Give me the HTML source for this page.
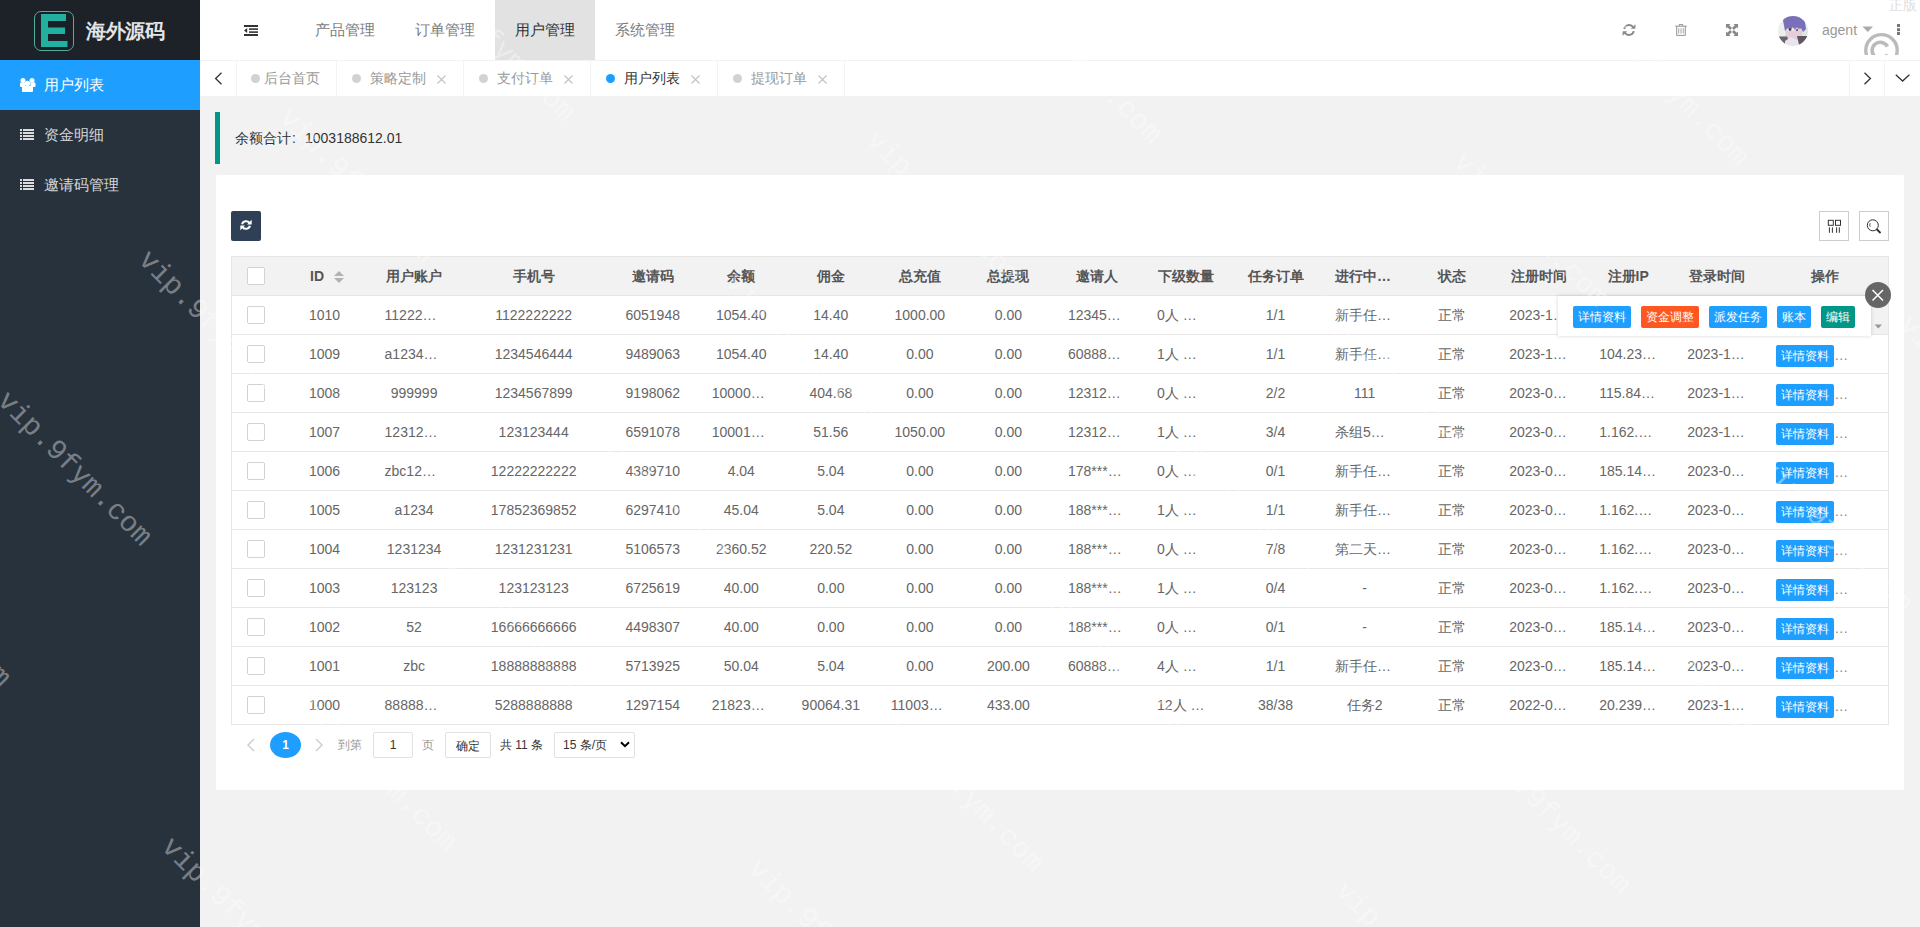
<!DOCTYPE html>
<html><head><meta charset="utf-8"><title>用户列表</title>
<style>
*{box-sizing:border-box;margin:0;padding:0}
html,body{width:1920px;height:927px;overflow:hidden}
body{position:relative;background:#f2f2f2;font-family:"Liberation Sans",sans-serif;font-size:14px;color:#666}
.abs{position:absolute}
svg{position:absolute;overflow:visible}
#side{position:absolute;left:0;top:0;width:200px;height:927px;background:#28323c;overflow:hidden}
#logo{position:absolute;left:0;top:0;width:200px;height:60px;background:#1d2229}
#logo .lbox{position:absolute;left:34px;top:11px;width:40px;height:40px;border:1px solid #4fae9f;border-radius:7px;background:#1a2027}
#logo .ltxt{position:absolute;left:86px;top:17px;font-size:20px;font-weight:bold;color:#e4e4e4;line-height:28px;letter-spacing:-0.5px}
.mi{position:absolute;left:0;width:200px;height:50px;line-height:50px;color:#d5d7d9;font-size:15px}
.mi .t{position:absolute;left:44px;top:0}
.mi.on{background:#1e9fff;color:#fff}
#hdr{position:absolute;left:200px;top:0;width:1720px;height:60px;background:#fff;overflow:hidden}
.nav{position:absolute;top:0;height:60px;line-height:60px;font-size:15px;color:#7c7c7c;width:100px;text-align:center}
.nav.on{background:#e2e2e2;color:#333}
#tabs{position:absolute;left:200px;top:60px;width:1720px;height:36px;background:#fff;border-top:1px solid #f3f3f3}
.tt{position:absolute;top:0;line-height:35px;color:#999;font-size:14px}
.dot{position:absolute;top:13px;width:9px;height:9px;border-radius:50%;background:#d2d2d2}
.sep{position:absolute;top:0;width:1px;height:35px;background:#f3f3f3}
#quote{position:absolute;left:215px;top:112px;width:1689px;height:52px;border-left:5px solid #009688;background:#f2f2f2}
#quote .t{position:absolute;left:15px;top:16px;line-height:20px;color:#333;font-size:14px}
#card{position:absolute;left:216px;top:175px;width:1688px;height:615px;background:#fff;border-radius:2px}
.tb{position:absolute;left:231px;top:256px;border-collapse:collapse;table-layout:fixed;width:1658px;border:1px solid #e6e6e6}
.tb th,.tb td{padding:5px 0;border-bottom:1px solid #e6e6e6;text-align:center}
.tb th{background:#f2f2f2;font-weight:bold;color:#555}
.tb td.op{text-align:left}
.cell{height:28px;line-height:28px;padding:0 15px;overflow:hidden;white-space:nowrap;text-overflow:ellipsis;position:relative}
.cell.cb{padding:0}
.cell.l{text-align:left}
.ck{display:inline-block;width:18px;height:18px;border:1px solid #d2d2d2;background:#fff;vertical-align:middle;margin-top:-3px;border-radius:2px}
.sort{display:inline-block;width:10px;height:20px;margin-left:5px;vertical-align:middle;position:relative;margin-top:-3px}
.sort:before{content:"";position:absolute;left:5px;top:5px;border:5.5px solid transparent;border-top:0;border-bottom:5px solid #b2b2b2}
.sort:after{content:"";position:absolute;left:5px;top:12px;border:5.5px solid transparent;border-bottom:0;border-top:5px solid #b2b2b2}
.bx{display:inline-block;height:22px;line-height:22px;padding:0 5px;font-size:12px;color:#fff;border-radius:2px;vertical-align:middle;margin-top:-2px;position:relative;top:2px}
.bn{background:#1e9fff}.bd{background:#ff5722}.bg{background:#009688}
.dots{vertical-align:middle;letter-spacing:0;color:#888}
.tbtn{position:absolute;top:211px;width:30px;height:30px;border:1px solid #ccc;background:#fff}
#tips{position:absolute;left:1558px;top:296px;width:313px;height:40px;background:#fff;box-shadow:0 0 4px rgba(0,0,0,.16);padding:10px 15px}
#tips{white-space:nowrap;font-size:0}
#tips .bx{margin-top:0;vertical-align:top;margin-left:10px;top:0}
#tips .bx:first-child{margin-left:0}
#pager{position:absolute;left:231px;top:731px;height:28px;font-size:12px;color:#999}
.wm{position:absolute;font-family:"Liberation Mono",monospace;font-size:28.5px;line-height:1;color:rgba(255,255,255,.4);transform-origin:0 0;transform:rotate(45deg);white-space:nowrap;pointer-events:none}
</style></head><body>
<div id="side">
  <div id="logo">
    <div class="lbox"></div>
    <svg style="left:0;top:0" width="200" height="60"><path fill="#22b0a0" d="M41 14h25v7H48v6.5h17v6.5H48v7h19.5v6H41z"/></svg>
    <div class="ltxt">海外源码</div>
  </div>
  <div class="mi on" style="top:60px">
    <svg style="left:0;top:-60px" width="40" height="120"><g fill="#fff">
      <circle cx="23" cy="80.5" r="2.5"/><circle cx="32" cy="80.5" r="2.5"/>
      <rect x="20" y="82.5" width="5" height="4.5" rx="1"/><rect x="30.5" y="82.5" width="5" height="4.5" rx="1"/>
      <circle cx="27.5" cy="83.5" r="2.8"/><rect x="22" y="86" width="11" height="6" rx="1"/></g></svg>
    <span class="t">用户列表</span></div>
  <div class="mi" style="top:110px">
    <svg style="left:0;top:0" width="40" height="50"><g fill="#dcdcdc">
      <rect x="20" y="19" width="2" height="2"/><rect x="23" y="19" width="11" height="2"/>
      <rect x="20" y="22" width="2" height="2"/><rect x="23" y="22" width="11" height="2"/>
      <rect x="20" y="25" width="2" height="2"/><rect x="23" y="25" width="11" height="2"/>
      <rect x="20" y="28" width="2" height="2"/><rect x="23" y="28" width="11" height="2"/></g></svg>
    <span class="t">资金明细</span></div>
  <div class="mi" style="top:160px">
    <svg style="left:0;top:0" width="40" height="50"><g fill="#dcdcdc">
      <rect x="20" y="19" width="2" height="2"/><rect x="23" y="19" width="11" height="2"/>
      <rect x="20" y="22" width="2" height="2"/><rect x="23" y="22" width="11" height="2"/>
      <rect x="20" y="25" width="2" height="2"/><rect x="23" y="25" width="11" height="2"/>
      <rect x="20" y="28" width="2" height="2"/><rect x="23" y="28" width="11" height="2"/></g></svg>
    <span class="t">邀请码管理</span></div>
</div>
<div id="hdr">
  <svg style="left:0;top:0" width="80" height="60"><g fill="#333">
    <rect x="44" y="25" width="14" height="2"/><rect x="49" y="28.3" width="9" height="1.6"/>
    <rect x="49" y="31.3" width="9" height="1.6"/><rect x="44" y="34" width="14" height="2"/>
    <path d="M44 30.5L47.2 28v5z"/></g></svg>
  <div class="nav" style="left:95px">产品管理</div>
  <div class="nav" style="left:195px">订单管理</div>
  <div class="nav on" style="left:295px">用户管理</div>
  <div class="nav" style="left:395px">系统管理</div>
  <!-- refresh -->
  <svg style="left:1422px;top:23px" width="14" height="14" viewBox="0 0 14 14"><g fill="none" stroke="#888" stroke-width="1.8">
    <path d="M2.2 6A5 5 0 0 1 11.2 4.2"/><path d="M11.8 8A5 5 0 0 1 2.8 9.8"/></g>
    <g fill="#888"><path d="M13.4 1.2v4.6H8.8z"/><path d="M0.6 12.8V8.2h4.6z"/></g></svg>
  <!-- trash -->
  <svg style="left:1475px;top:24px" width="12" height="12" viewBox="0 0 12 12"><g fill="none" stroke="#888" stroke-width="0.9">
    <path d="M0.2 2.2h11.6"/><path d="M4.2 2V0.6h3.6V2"/><path d="M1.7 2.4v9h8.6v-9"/>
    <path d="M3.7 4.3v5.3M6 4.3v5.3M8.3 4.3v5.3" stroke-width="0.75"/></g></svg>
  <!-- fullscreen -->
  <svg style="left:1526px;top:24px" width="12" height="12" viewBox="0 0 12 12"><g fill="#888">
    <path d="M0 0h4.5L3.2 1.3 6 4.1 4.1 6 1.3 3.2 0 4.5z"/>
    <path d="M12 0v4.5L10.7 3.2 7.9 6 6 4.1 8.8 1.3 7.5 0z"/>
    <path d="M0 12V7.5l1.3 1.3L4.1 6 6 7.9 3.2 10.7 4.5 12z"/>
    <path d="M12 12H7.5l1.3-1.3L6 7.9 7.9 6l2.8 2.8L12 7.5z"/></g></svg>
  <!-- avatar -->
  <svg style="left:1578px;top:16px" width="30" height="30" viewBox="0 0 30 30">
    <defs><clipPath id="av"><circle cx="15" cy="15" r="15"/></clipPath><filter id="bl"><feGaussianBlur stdDeviation="0.7"/></filter></defs>
    <g clip-path="url(#av)"><g filter="url(#bl)">
      <rect x="-2" y="-2" width="34" height="34" fill="#eceee9"/>
      <path d="M23 8h9v22h-9z" fill="#dfe7e2"/>
      <path d="M4 -1h22l2 14-3 3-2-4-2 3-2-4-2 4-2-4-3 4-2-3-3 3z" fill="#7a70b9"/>
      <path d="M8 13l3 2 2-3 2 4 2-4 2 3 2-3 3 3v7l-9 4-8-4z" fill="#e4ccd8"/>
      <circle cx="12" cy="13.5" r="1.2" fill="#3c3450"/><circle cx="19" cy="14" r="1" fill="#4a405e"/>
      <path d="M-1 20.5h10l4 10H-1z" fill="#696270"/>
      <path d="M31 20h-12l2.5 11H31z" fill="#5e5762"/>
      <path d="M7 25l6-4 6 3 1.5 7H7z" fill="#e9e3ec"/>
    </g></g></svg>
  <div class="abs" style="left:1622px;top:20px;font-size:14px;color:#999;line-height:20px">agent</div>
  <svg style="left:1662px;top:26px" width="12" height="8"><path d="M0.5 0.5h10.5L5.75 6z" fill="#aaa"/></svg>
  <svg style="left:1696px;top:24px" width="6" height="12"><g fill="#777"><rect x="1" y="0" width="3" height="3"/><rect x="1" y="4.2" width="3" height="3"/><rect x="1" y="8" width="3" height="3"/></g></svg>
  <!-- copyright ring -->
  <svg style="left:1663px;top:32px;overflow:hidden" width="38" height="23" viewBox="0 0 38 23"><g fill="none" stroke="#bbb">
    <circle cx="18.5" cy="18.3" r="15.7" stroke-width="3.4"/>
    <path d="M24.5 14.5A8.2 8.2 0 1 0 24.5 22.5" stroke-width="3.6"/></g></svg>
  <div class="abs" style="left:1689px;top:-5px;font-size:14px;color:#e0e0e0;line-height:20px">正版</div>
</div>
<div id="tabs">
  <svg style="left:14px;top:11px" width="10" height="14"><path d="M7.5 0.8L1.6 6.5l5.9 5.7" fill="none" stroke="#333" stroke-width="1.3"/></svg>
  <div class="sep" style="left:36px"></div>
  <div class="dot" style="left:51px"></div><div class="tt" style="left:64px">后台首页</div>
  <div class="sep" style="left:136px"></div>
  <div class="dot" style="left:152px"></div><div class="tt" style="left:170px">策略定制</div>
  <svg style="left:237px;top:14px" width="9" height="9"><path d="M0.5 0.5l8 8M8.5 0.5l-8 8" stroke="#c2c2c2" stroke-width="1.1"/></svg>
  <div class="sep" style="left:263px"></div>
  <div class="dot" style="left:279px"></div><div class="tt" style="left:297px">支付订单</div>
  <svg style="left:364px;top:14px" width="9" height="9"><path d="M0.5 0.5l8 8M8.5 0.5l-8 8" stroke="#c2c2c2" stroke-width="1.1"/></svg>
  <div class="sep" style="left:390px"></div>
  <div class="dot" style="left:406px;background:#1e9fff"></div><div class="tt" style="left:424px;color:#333">用户列表</div>
  <svg style="left:491px;top:14px" width="9" height="9"><path d="M0.5 0.5l8 8M8.5 0.5l-8 8" stroke="#c2c2c2" stroke-width="1.1"/></svg>
  <div class="sep" style="left:517px"></div>
  <div class="dot" style="left:533px"></div><div class="tt" style="left:551px">提现订单</div>
  <svg style="left:618px;top:14px" width="9" height="9"><path d="M0.5 0.5l8 8M8.5 0.5l-8 8" stroke="#c2c2c2" stroke-width="1.1"/></svg>
  <div class="sep" style="left:644px"></div>
  <div class="sep" style="left:1649px"></div>
  <svg style="left:1663px;top:11px" width="10" height="14"><path d="M1.5 0.8l5.9 5.7-5.9 5.7" fill="none" stroke="#333" stroke-width="1.3"/></svg>
  <div class="sep" style="left:1684px"></div>
  <svg style="left:1695px;top:13px" width="16" height="9"><path d="M0.8 0.8l6.8 6.2 6.8-6.2" fill="none" stroke="#333" stroke-width="1.3"/></svg>
</div>
<div id="quote"><div class="t">余额合计<span style="display:inline-block;width:14px;padding-left:1px">:</span>1003188612.01</div></div>
<div id="card"></div>
<!-- toolbar -->
<div class="abs" style="left:231px;top:211px;width:30px;height:30px;background:#2f4056;border-radius:2px"></div>
<svg style="left:240px;top:219px" width="12" height="12" viewBox="0 0 14 14"><g fill="none" stroke="#fff" stroke-width="2.4">
  <path d="M2.4 6.2A4.8 4.8 0 0 1 11 4.6"/><path d="M11.6 7.8A4.8 4.8 0 0 1 3 9.4"/></g>
  <g fill="#fff"><path d="M13.6 1v5.4H8.2z"/><path d="M0.4 13V7.6h5.4z"/></g></svg>
<div class="tbtn" style="left:1819px"></div>
<svg style="left:1827px;top:219px" width="16" height="16"><g fill="none" stroke="#333" stroke-width="1">
  <rect x="1.3" y="1.3" width="5" height="5"/><rect x="8.5" y="1.3" width="5" height="5"/>
  <path d="M2.4 8.3v5.5M5.4 8.3v5.5M9.6 8.3v5.5M12.3 8.3v5.5" stroke-width="1"/></g></svg>
<div class="tbtn" style="left:1859px"></div>
<svg style="left:1866px;top:219px" width="16" height="16"><g fill="none" stroke="#333">
  <circle cx="6.8" cy="6.3" r="5.5" stroke-width="1"/><path d="M11 10.6l3 2.8" stroke-width="2" stroke-linecap="round"/><path d="M4.3 4.2a3 3 0 0 0 0 3.6" stroke-width="0.8"/></g></svg>
<table class="tb"><colgroup><col style="width:48px"><col style="width:90px"><col style="width:89px"><col style="width:150px"><col style="width:88px"><col style="width:89px"><col style="width:90px"><col style="width:88px"><col style="width:89px"><col style="width:89px"><col style="width:89px"><col style="width:89px"><col style="width:89px"><col style="width:85px"><col style="width:90px"><col style="width:88px"><col style="width:89px"><col style="width:127px"></colgroup><thead><tr><th><div class="cell cb"><i class="ck"></i></div></th><th><div class="cell">ID<span class="sort"><i class="su"></i><i class="sd"></i></span></div></th><th><div class="cell">用户账户</div></th><th><div class="cell">手机号</div></th><th><div class="cell">邀请码</div></th><th><div class="cell">余额</div></th><th><div class="cell">佣金</div></th><th><div class="cell">总充值</div></th><th><div class="cell">总提现</div></th><th><div class="cell">邀请人</div></th><th><div class="cell">下级数量</div></th><th><div class="cell">任务订单</div></th><th><div class="cell">进行中任务</div></th><th><div class="cell">状态</div></th><th><div class="cell">注册时间</div></th><th><div class="cell">注册IP</div></th><th><div class="cell">登录时间</div></th><th><div class="cell">操作</div></th></tr></thead><tbody><tr><td><div class="cell cb"><i class="ck"></i></div></td><td><div class="cell">1010</div></td><td><div class="cell">1122222222</div></td><td><div class="cell">1122222222</div></td><td><div class="cell">6051948</div></td><td><div class="cell">1054.40</div></td><td><div class="cell">14.40</div></td><td><div class="cell">1000.00</div></td><td><div class="cell">0.00</div></td><td><div class="cell">1234567890</div></td><td><div class="cell l">0人 …</div></td><td><div class="cell">1/1</div></td><td><div class="cell">新手任务一二</div></td><td><div class="cell">正常</div></td><td><div class="cell">2023-1x-xx 10:10:10</div></td><td><div class="cell"></div></td><td><div class="cell">2023-1x</div></td><td class="op"><div class="cell"><span class="bx bn">详情资料</span><span class="dots">…</span></div></td></tr><tr><td><div class="cell cb"><i class="ck"></i></div></td><td><div class="cell">1009</div></td><td><div class="cell">a123456789</div></td><td><div class="cell">1234546444</div></td><td><div class="cell">9489063</div></td><td><div class="cell">1054.40</div></td><td><div class="cell">14.40</div></td><td><div class="cell">0.00</div></td><td><div class="cell">0.00</div></td><td><div class="cell">6088888888</div></td><td><div class="cell l">1人 …</div></td><td><div class="cell">1/1</div></td><td><div class="cell">新手任务一二</div></td><td><div class="cell">正常</div></td><td><div class="cell">2023-1x-xx 10:10:10</div></td><td><div class="cell">104.234.56.78</div></td><td><div class="cell">2023-1x-xx 10:10</div></td><td class="op"><div class="cell"><span class="bx bn">详情资料</span><span class="dots">…</span></div></td></tr><tr><td><div class="cell cb"><i class="ck"></i></div></td><td><div class="cell">1008</div></td><td><div class="cell">999999</div></td><td><div class="cell">1234567899</div></td><td><div class="cell">9198062</div></td><td><div class="cell">10000000.00</div></td><td><div class="cell">404.68</div></td><td><div class="cell">0.00</div></td><td><div class="cell">0.00</div></td><td><div class="cell">1231231234</div></td><td><div class="cell l">0人 …</div></td><td><div class="cell">2/2</div></td><td><div class="cell">111</div></td><td><div class="cell">正常</div></td><td><div class="cell">2023-0x-xx 10:10:10</div></td><td><div class="cell">115.84.56.78</div></td><td><div class="cell">2023-1x-xx 10:10</div></td><td class="op"><div class="cell"><span class="bx bn">详情资料</span><span class="dots">…</span></div></td></tr><tr><td><div class="cell cb"><i class="ck"></i></div></td><td><div class="cell">1007</div></td><td><div class="cell">1231231234</div></td><td><div class="cell">123123444</div></td><td><div class="cell">6591078</div></td><td><div class="cell">10001000.00</div></td><td><div class="cell">51.56</div></td><td><div class="cell">1050.00</div></td><td><div class="cell">0.00</div></td><td><div class="cell">1231231234</div></td><td><div class="cell l">1人 …</div></td><td><div class="cell">3/4</div></td><td><div class="cell">杀组5一二三</div></td><td><div class="cell">正常</div></td><td><div class="cell">2023-0x-xx 10:10:10</div></td><td><div class="cell">1.162.123.45</div></td><td><div class="cell">2023-1x-xx 10:10</div></td><td class="op"><div class="cell"><span class="bx bn">详情资料</span><span class="dots">…</span></div></td></tr><tr><td><div class="cell cb"><i class="ck"></i></div></td><td><div class="cell">1006</div></td><td><div class="cell">zbc1234567</div></td><td><div class="cell">12222222222</div></td><td><div class="cell">4389710</div></td><td><div class="cell">4.04</div></td><td><div class="cell">5.04</div></td><td><div class="cell">0.00</div></td><td><div class="cell">0.00</div></td><td><div class="cell">178****1234</div></td><td><div class="cell l">0人 …</div></td><td><div class="cell">0/1</div></td><td><div class="cell">新手任务一二</div></td><td><div class="cell">正常</div></td><td><div class="cell">2023-0x-xx 10:10:10</div></td><td><div class="cell">185.14.56.78</div></td><td><div class="cell">2023-0x-xx 10:10</div></td><td class="op"><div class="cell"><span class="bx bn">详情资料</span><span class="dots">…</span></div></td></tr><tr><td><div class="cell cb"><i class="ck"></i></div></td><td><div class="cell">1005</div></td><td><div class="cell">a1234</div></td><td><div class="cell">17852369852</div></td><td><div class="cell">6297410</div></td><td><div class="cell">45.04</div></td><td><div class="cell">5.04</div></td><td><div class="cell">0.00</div></td><td><div class="cell">0.00</div></td><td><div class="cell">188****1234</div></td><td><div class="cell l">1人 …</div></td><td><div class="cell">1/1</div></td><td><div class="cell">新手任务一二</div></td><td><div class="cell">正常</div></td><td><div class="cell">2023-0x-xx 10:10:10</div></td><td><div class="cell">1.162.123.45</div></td><td><div class="cell">2023-0x-xx 10:10</div></td><td class="op"><div class="cell"><span class="bx bn">详情资料</span><span class="dots">…</span></div></td></tr><tr><td><div class="cell cb"><i class="ck"></i></div></td><td><div class="cell">1004</div></td><td><div class="cell">1231234</div></td><td><div class="cell">1231231231</div></td><td><div class="cell">5106573</div></td><td><div class="cell">2360.52</div></td><td><div class="cell">220.52</div></td><td><div class="cell">0.00</div></td><td><div class="cell">0.00</div></td><td><div class="cell">188****1234</div></td><td><div class="cell l">0人 …</div></td><td><div class="cell">7/8</div></td><td><div class="cell">第二天任务一</div></td><td><div class="cell">正常</div></td><td><div class="cell">2023-0x-xx 10:10:10</div></td><td><div class="cell">1.162.123.45</div></td><td><div class="cell">2023-0x-xx 10:10</div></td><td class="op"><div class="cell"><span class="bx bn">详情资料</span><span class="dots">…</span></div></td></tr><tr><td><div class="cell cb"><i class="ck"></i></div></td><td><div class="cell">1003</div></td><td><div class="cell">123123</div></td><td><div class="cell">123123123</div></td><td><div class="cell">6725619</div></td><td><div class="cell">40.00</div></td><td><div class="cell">0.00</div></td><td><div class="cell">0.00</div></td><td><div class="cell">0.00</div></td><td><div class="cell">188****1234</div></td><td><div class="cell l">1人 …</div></td><td><div class="cell">0/4</div></td><td><div class="cell">-</div></td><td><div class="cell">正常</div></td><td><div class="cell">2023-0x-xx 10:10:10</div></td><td><div class="cell">1.162.123.45</div></td><td><div class="cell">2023-0x-xx 10:10</div></td><td class="op"><div class="cell"><span class="bx bn">详情资料</span><span class="dots">…</span></div></td></tr><tr><td><div class="cell cb"><i class="ck"></i></div></td><td><div class="cell">1002</div></td><td><div class="cell">52</div></td><td><div class="cell">16666666666</div></td><td><div class="cell">4498307</div></td><td><div class="cell">40.00</div></td><td><div class="cell">0.00</div></td><td><div class="cell">0.00</div></td><td><div class="cell">0.00</div></td><td><div class="cell">188****1234</div></td><td><div class="cell l">0人 …</div></td><td><div class="cell">0/1</div></td><td><div class="cell">-</div></td><td><div class="cell">正常</div></td><td><div class="cell">2023-0x-xx 10:10:10</div></td><td><div class="cell">185.14.56.78</div></td><td><div class="cell">2023-0x-xx 10:10</div></td><td class="op"><div class="cell"><span class="bx bn">详情资料</span><span class="dots">…</span></div></td></tr><tr><td><div class="cell cb"><i class="ck"></i></div></td><td><div class="cell">1001</div></td><td><div class="cell">zbc</div></td><td><div class="cell">18888888888</div></td><td><div class="cell">5713925</div></td><td><div class="cell">50.04</div></td><td><div class="cell">5.04</div></td><td><div class="cell">0.00</div></td><td><div class="cell">200.00</div></td><td><div class="cell">6088888888</div></td><td><div class="cell l">4人 …</div></td><td><div class="cell">1/1</div></td><td><div class="cell">新手任务一二</div></td><td><div class="cell">正常</div></td><td><div class="cell">2023-0x-xx 10:10:10</div></td><td><div class="cell">185.14.56.78</div></td><td><div class="cell">2023-0x-xx 10:10</div></td><td class="op"><div class="cell"><span class="bx bn">详情资料</span><span class="dots">…</span></div></td></tr><tr><td><div class="cell cb"><i class="ck"></i></div></td><td><div class="cell">1000</div></td><td><div class="cell">8888888888</div></td><td><div class="cell">5288888888</div></td><td><div class="cell">1297154</div></td><td><div class="cell">21823000.00</div></td><td><div class="cell">90064.31</div></td><td><div class="cell">11003000.00</div></td><td><div class="cell">433.00</div></td><td><div class="cell"></div></td><td><div class="cell l">12人 …</div></td><td><div class="cell">38/38</div></td><td><div class="cell">任务2</div></td><td><div class="cell">正常</div></td><td><div class="cell">2022-0x-xx 10:10:10</div></td><td><div class="cell">20.239.56.78</div></td><td><div class="cell">2023-1x-xx 10:10</div></td><td class="op"><div class="cell"><span class="bx bn">详情资料</span><span class="dots">…</span></div></td></tr></tbody></table>
<!-- tips popup -->
<div class="abs" style="left:1870px;top:296px;width:18px;height:38px;background:#f2f2f2"></div>
<svg style="left:1874px;top:324px" width="9" height="5"><path d="M0.5 0.5h7.5L4.25 4.5z" fill="#999"/></svg>
<div id="tips"><span class="bx bn">详情资料</span><span class="bx bd">资金调整</span><span class="bx bn">派发任务</span><span class="bx bn">账本</span><span class="bx bg">编辑</span></div>
<svg style="left:1865px;top:282px" width="26" height="26"><circle cx="13" cy="13" r="13" fill="#666"/><path d="M7.5 8l10.5 10.5M18 8L7.5 18.5" stroke="#fff" stroke-width="1.5"/></svg>
<!-- pager -->
<svg style="left:246px;top:738px" width="10" height="14"><path d="M8 1L2 7l6 6" fill="none" stroke="#ccc" stroke-width="1.4"/></svg>
<div class="abs" style="left:270px;top:732px;width:31px;height:26px;border-radius:50%;background:#1e9fff;color:#fff;font-size:12px;font-weight:bold;text-align:center;line-height:26px">1</div>
<svg style="left:314px;top:738px" width="10" height="14"><path d="M2 1l6 6-6 6" fill="none" stroke="#ccc" stroke-width="1.4"/></svg>
<div class="abs" style="left:338px;top:732px;font-size:12px;line-height:26px;color:#999">到第</div>
<div class="abs" style="left:373px;top:732px;width:40px;height:26px;border:1px solid #e2e2e2;border-radius:2px;font-size:12px;line-height:24px;text-align:center;color:#333">1</div>
<div class="abs" style="left:422px;top:732px;font-size:12px;line-height:26px;color:#999">页</div>
<div class="abs" style="left:445px;top:732px;width:46px;height:26px;border:1px solid #e2e2e2;border-radius:2px;font-size:12px;line-height:26px;text-align:center;color:#333">确定</div>
<div class="abs" style="left:500px;top:732px;font-size:12px;line-height:26px;color:#333">共 11 条</div>
<div class="abs" style="left:554px;top:732px;width:81px;height:26px;border:1px solid #e2e2e2;border-radius:2px;font-size:12px;line-height:24px;color:#333;padding-left:8px">15 条/页</div>
<svg style="left:620px;top:741px" width="10" height="8"><path d="M1 1.2l4 4 4-4" fill="none" stroke="#000" stroke-width="2"/></svg>
<!-- watermarks -->
<div class="wm" style="left:-130px;top:528.3px">vip.9fym.com</div>
<div class="wm" style="left:11px;top:387.0px">vip.9fym.com</div>
<div class="wm" style="left:152px;top:245.7px">vip.9fym.com</div>
<div class="wm" style="left:293px;top:104.4px">vip.9fym.com</div>
<div class="wm" style="left:434px;top:-36.9px">vip.9fym.com</div>
<div class="wm" style="left:175px;top:832.8px">vip.9fym.com</div>
<div class="wm" style="left:316px;top:691.5px">vip.9fym.com</div>
<div class="wm" style="left:457px;top:550.2px">vip.9fym.com</div>
<div class="wm" style="left:598px;top:408.9px">vip.9fym.com</div>
<div class="wm" style="left:739px;top:267.6px">vip.9fym.com</div>
<div class="wm" style="left:880px;top:126.3px">vip.9fym.com</div>
<div class="wm" style="left:1021px;top:-15.0px">vip.9fym.com</div>
<div class="wm" style="left:1162px;top:-156.3px">vip.9fym.com</div>
<div class="wm" style="left:762px;top:854.7px">vip.9fym.com</div>
<div class="wm" style="left:903px;top:713.4px">vip.9fym.com</div>
<div class="wm" style="left:1044px;top:572.1px">vip.9fym.com</div>
<div class="wm" style="left:1185px;top:430.8px">vip.9fym.com</div>
<div class="wm" style="left:1326px;top:289.5px">vip.9fym.com</div>
<div class="wm" style="left:1467px;top:148.2px">vip.9fym.com</div>
<div class="wm" style="left:1608px;top:6.9px">vip.9fym.com</div>
<div class="wm" style="left:1749px;top:-134.4px">vip.9fym.com</div>
<div class="wm" style="left:1349px;top:876.6px">vip.9fym.com</div>
<div class="wm" style="left:1490px;top:735.3px">vip.9fym.com</div>
<div class="wm" style="left:1631px;top:594.0px">vip.9fym.com</div>
<div class="wm" style="left:1772px;top:452.7px">vip.9fym.com</div>
<div class="wm" style="left:1913px;top:311.4px">vip.9fym.com</div>
</body></html>
